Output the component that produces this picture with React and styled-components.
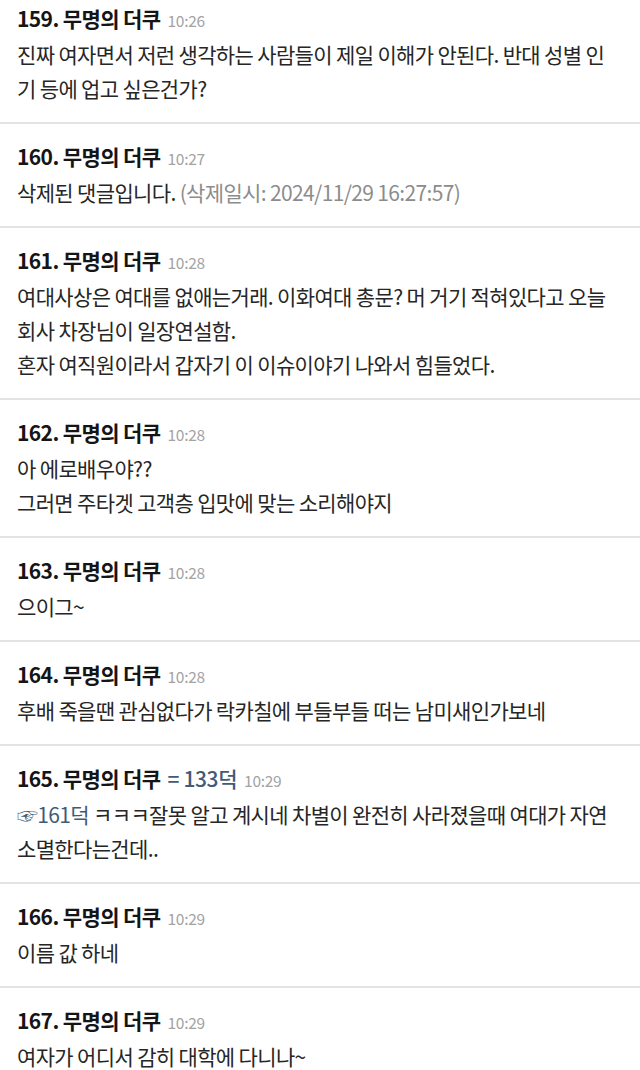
import React from "react";
import styled, { createGlobalStyle } from "styled-components";

const GlobalStyle = createGlobalStyle`
  body {
    margin: 0;
    background: #ffffff;
    font-family: "Noto Sans CJK KR", "Noto Sans", sans-serif;
  }
`;

const List = styled.div`
  width: 640px;
  overflow: hidden;
`;

const Comment = styled.div`
  padding: ${(props) => (props.first ? "1px" : "15px")} 17px 17px;
  border-bottom: 2px solid #e3e3e3;
`;

const Header = styled.div`
  display: flex;
  align-items: baseline;
  height: 34px;
  line-height: 34px;
  margin-bottom: 2px;
  white-space: nowrap;
`;

const Name = styled.span`
  font-size: 21px;
  font-weight: 700;
  color: #151515;
  letter-spacing: -0.6px;
`;

const Alias = styled.span`
  margin-left: 7px;
  font-size: 21px;
  font-weight: 500;
  color: #3f5b78;
  letter-spacing: -0.4px;
`;

const Time = styled.span`
  margin-left: 7px;
  font-size: 15.5px;
  color: #a3a3a3;
  letter-spacing: -0.3px;
`;

const Line = styled.div`
  font-size: 21px;
  line-height: 34px;
  color: #262626;
  letter-spacing: -0.65px;
  white-space: nowrap;
`;

const Muted = styled.span`
  color: #8c8c8c;
`;

const Ref = styled.span`
  color: #3f5b78;
`;

const comments = [
  {
    no: 159,
    time: "10:26",
    lines: [
      "진짜 여자면서 저런 생각하는 사람들이 제일 이해가 안된다. 반대 성별 인",
      "기 등에 업고 싶은건가?",
    ],
  },
  {
    no: 160,
    time: "10:27",
    deleted: "2024/11/29 16:27:57",
  },
  {
    no: 161,
    time: "10:28",
    lines: [
      "여대사상은 여대를 없애는거래. 이화여대 총문? 머 거기 적혀있다고 오늘",
      "회사 차장님이 일장연설함.",
      "혼자 여직원이라서 갑자기 이 이슈이야기 나와서 힘들었다.",
    ],
  },
  {
    no: 162,
    time: "10:28",
    lines: ["아 에로배우야??", "그러면 주타겟 고객층 입맛에 맞는 소리해야지"],
  },
  { no: 163, time: "10:28", lines: ["으이그~"] },
  {
    no: 164,
    time: "10:28",
    lines: ["후배 죽을땐 관심없다가 락카칠에 부들부들 떠는 남미새인가보네"],
  },
  {
    no: 165,
    time: "10:29",
    alias: "= 133덕",
    reply: "☞161덕",
    lines: [
      " ㅋㅋㅋ잘못 알고 계시네 차별이 완전히 사라졌을때 여대가 자연",
      "소멸한다는건데..",
    ],
  },
  { no: 166, time: "10:29", lines: ["이름 값 하네"] },
  { no: 167, time: "10:29", lines: ["여자가 어디서 감히 대학에 다니나~"] },
];

const CommentItem = ({ item, first }) => (
  <Comment first={first}>
    <Header>
      <Name>{item.no}. 무명의 더쿠</Name>
      {item.alias && <Alias>{item.alias}</Alias>}
      <Time>{item.time}</Time>
    </Header>
    {item.deleted ? (
      <Line>
        삭제된 댓글입니다. <Muted>(삭제일시: {item.deleted})</Muted>
      </Line>
    ) : (
      item.lines.map((text, i) => (
        <Line key={i}>
          {i === 0 && item.reply && <Ref>{item.reply}</Ref>}
          {text}
        </Line>
      ))
    )}
  </Comment>
);

export default function App() {
  return (
    <>
      <GlobalStyle />
      <List>
        {comments.map((item, i) => (
          <CommentItem key={item.no} item={item} first={i === 0} />
        ))}
      </List>
    </>
  );
}
